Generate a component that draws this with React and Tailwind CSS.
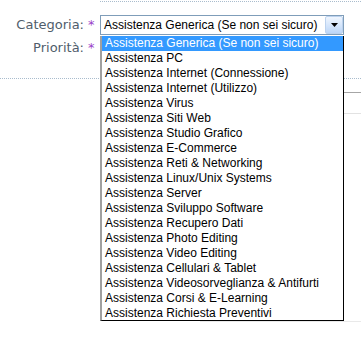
import React from 'react';

const options = [
  'Assistenza Generica (Se non sei sicuro)',
  'Assistenza PC',
  'Assistenza Internet (Connessione)',
  'Assistenza Internet (Utilizzo)',
  'Assistenza Virus',
  'Assistenza Siti Web',
  'Assistenza Studio Grafico',
  'Assistenza E-Commerce',
  'Assistenza Reti & Networking',
  'Assistenza Linux/Unix Systems',
  'Assistenza Server',
  'Assistenza Sviluppo Software',
  'Assistenza Recupero Dati',
  'Assistenza Photo Editing',
  'Assistenza Video Editing',
  'Assistenza Cellulari & Tablet',
  'Assistenza Videosorveglianza & Antifurti',
  'Assistenza Corsi & E-Learning',
  'Assistenza Richiesta Preventivi',
];

const labelFont = "font-['DejaVu_Sans',sans-serif]";
const listFont = "font-['Liberation_Sans',Arial,sans-serif]";

export default function App() {
  return (
    <div className="relative w-[361px] h-[338px] bg-white overflow-hidden">
      {/* top rule */}
      <div className="ml-[100px] mt-px border-t border-dotted border-[#a9bccd]" />

      {/* Categoria row */}
      <div className={`flex items-center h-[20px] mt-[13px] ${labelFont} text-[13px] text-[#4f5d6b]`}>
        <div className="w-[84px] text-right">Categoria:</div>
        <div className="w-[16px] pl-[4px] text-[#9b3fc9]">*</div>
        <div className="flex items-center w-[244px] h-[20px] border border-[#7f9db9] bg-white">
          <span className={`flex-1 pl-[3px] ${listFont} text-[12px] text-black whitespace-nowrap`}>
            Assistenza Generica (Se non sei sicuro)
          </span>
          <div className="flex items-center justify-center w-[18px] h-[18px] border border-[#bcd2ee] rounded-[2px] bg-gradient-to-b from-[#f0f6fe] to-[#bcd6f8]">
            <svg width="7" height="4" viewBox="0 0 7 4">
              <path d="M0 0h7L3.5 4z" fill="#000" />
            </svg>
          </div>
        </div>
      </div>

      {/* Priorità row */}
      <div className={`flex items-center h-[20px] mt-[3px] ${labelFont} text-[13px] text-[#4f5d6b]`}>
        <div className="w-[84px] text-right">Priorità:</div>
        <div className="w-[16px] pl-[4px] text-[#9b3fc9]">*</div>
      </div>

      {/* section separators */}
      <div className="mt-[20px] border-t border-dotted border-[#a9bccd]" />
      <div className="ml-[200px] mt-[13px] border-t border-[#a6a6a6]" />
      <div className="ml-[200px] mt-[20px] border-t border-[#e2e2e2]" />
      <div className="ml-[200px] mt-[207px] border-t border-[#e9e9e9]" />

      {/* open dropdown list */}
      <ul className={`absolute left-[100px] top-[36px] w-[244px] h-[285px] bg-white border-l-2 border-l-[#a0a0a0] border-r border-r-black border-b border-b-black ${listFont} text-[12px] text-black`}>
        {options.map((o, i) => (
          <li
            key={o}
            className={`h-[15px] leading-[15px] pl-[3px] whitespace-nowrap ${i === 0 ? 'bg-[#3399ff] text-white' : ''}`}
          >
            {o}
          </li>
        ))}
      </ul>
    </div>
  );
}
